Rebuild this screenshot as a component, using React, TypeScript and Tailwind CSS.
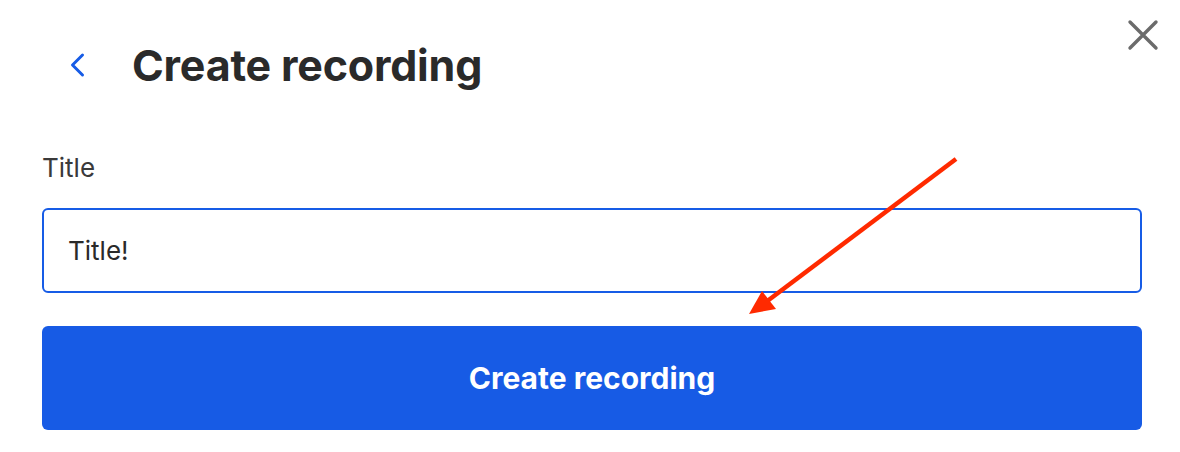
import { useState } from 'react'

export default function App() {
  const [title, setTitle] = useState('Title!')

  return (
    <div className="relative h-[452px] w-[1180px] overflow-hidden bg-white pl-[42px] pr-[38px] font-['Inter',sans-serif] text-[#2a2a2a]">
      <button
        type="button"
        aria-label="Close"
        className="absolute right-[20px] top-[18px] flex h-[34px] w-[34px] items-center justify-center text-[#6b6b6b]"
      >
        <svg viewBox="0 0 34 34" className="h-[34px] w-[34px]" fill="none" stroke="currentColor" strokeWidth="3.4" strokeLinecap="round">
          <path d="M4 4L30 30M30 4L4 30" />
        </svg>
      </button>

      <div className="box-content flex h-[70px] items-center pt-[30px]">
        <button type="button" aria-label="Back" className="ml-[26px] flex h-[26px] w-[18px] items-center justify-center text-[#175ce6]">
          <svg viewBox="0 0 18 26" className="h-[26px] w-[18px]" fill="none" stroke="currentColor" strokeWidth="3" strokeLinecap="round" strokeLinejoin="round">
            <path d="M14.5 3L4.5 13L14.5 23" />
          </svg>
        </button>
        <h1 className="ml-[46px] text-[43px] font-bold leading-none tracking-[-0.2px]">Create recording</h1>
      </div>

      <label className="mt-[52px] block text-[26px] leading-[32px] text-[#3a3a3a]">Title</label>

      <input
        value={title}
        onChange={(e) => setTitle(e.target.value)}
        className="mt-[24px] block h-[85px] w-full rounded-[6px] border-2 border-[#175ce6] px-[24px] text-[26px] text-[#2a2a2a] outline-none"
      />

      <button
        type="button"
        className="mt-[33px] flex h-[104px] w-full items-center justify-center rounded-[6px] bg-[#175be5] text-[30px] font-bold text-white"
      >
        Create recording
      </button>

      <svg className="pointer-events-none absolute left-0 top-0" width="1180" height="452" viewBox="0 0 1180 452">
        <line x1="956" y1="159" x2="766" y2="302" stroke="#ff2a00" strokeWidth="4.5" strokeLinecap="butt" />
        <polygon points="749,314 762,291 776,309" fill="#ff2a00" />
      </svg>
    </div>
  )
}
